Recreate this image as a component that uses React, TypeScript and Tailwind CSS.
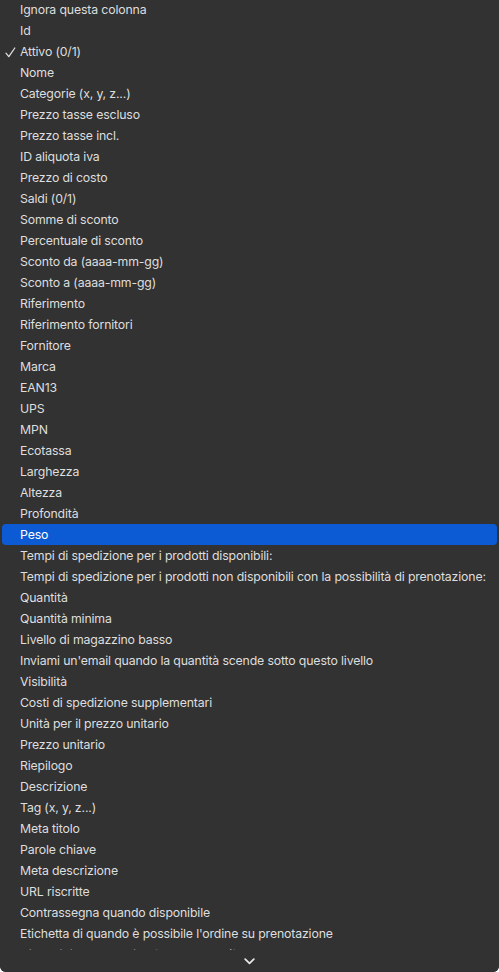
const items = [
  "Ignora questa colonna",
  "Id",
  "Attivo (0/1)",
  "Nome",
  "Categorie (x, y, z...)",
  "Prezzo tasse escluso",
  "Prezzo tasse incl.",
  "ID aliquota iva",
  "Prezzo di costo",
  "Saldi (0/1)",
  "Somme di sconto",
  "Percentuale di sconto",
  "Sconto da (aaaa-mm-gg)",
  "Sconto a (aaaa-mm-gg)",
  "Riferimento",
  "Riferimento fornitori",
  "Fornitore",
  "Marca",
  "EAN13",
  "UPS",
  "MPN",
  "Ecotassa",
  "Larghezza",
  "Altezza",
  "Profondità",
  "Peso",
  "Tempi di spedizione per i prodotti disponibili:",
  "Tempi di spedizione per i prodotti non disponibili con la possibilità di prenotazione:",
  "Quantità",
  "Quantità minima",
  "Livello di magazzino basso",
  "Inviami un'email quando la quantità scende sotto questo livello",
  "Visibilità",
  "Costi di spedizione supplementari",
  "Unità per il prezzo unitario",
  "Prezzo unitario",
  "Riepilogo",
  "Descrizione",
  "Tag (x, y, z...)",
  "Meta titolo",
  "Parole chiave",
  "Meta descrizione",
  "URL riscritte",
  "Contrassegna quando disponibile",
  "Etichetta di quando è possibile l'ordine su prenotazione",
  "Disponibile per l'ordine (0 = No, 1 = Sì)",
];

export default function App() {
  return (
    <div
      className="relative h-[972px] w-[499px] overflow-hidden rounded-b-[6px] bg-[#323232] text-[12.3px] text-[#dedede]"
      style={{ fontFamily: "Inter, 'Liberation Sans', sans-serif" }}
    >
      <ul className="mt-[-1px] px-[2px]">
        {items.map((label) => {
          const selected = label === "Peso";
          const checked = label === "Attivo (0/1)";
          return (
            <li
              key={label}
              className={`relative h-[21px] whitespace-nowrap rounded-[4px] pl-[18px] leading-[21px] tracking-[-0.15px] ${
                selected ? "bg-[#0c5bd4] text-white" : ""
              }`}
            >
              {checked && (
                <svg
                  className="absolute left-[3px] top-[6px]"
                  width="11"
                  height="11"
                  viewBox="0 0 11 11"
                  fill="none"
                >
                  <path
                    d="M1 6.2 L3.8 9.6 L9.8 1"
                    stroke="#dedede"
                    strokeWidth="1.3"
                    strokeLinecap="round"
                    strokeLinejoin="round"
                  />
                </svg>
              )}
              {label}
            </li>
          );
        })}
      </ul>
      <div className="absolute bottom-0 left-0 right-0 flex h-[22px] items-center justify-center bg-[#323232]">
        <svg width="11" height="7" viewBox="0 0 11 7" fill="none">
          <path
            d="M1.2 1.2 L5.5 5.3 L9.8 1.2"
            stroke="#e6e6e6"
            strokeWidth="1.8"
            strokeLinecap="round"
            strokeLinejoin="round"
          />
        </svg>
      </div>
    </div>
  );
}
